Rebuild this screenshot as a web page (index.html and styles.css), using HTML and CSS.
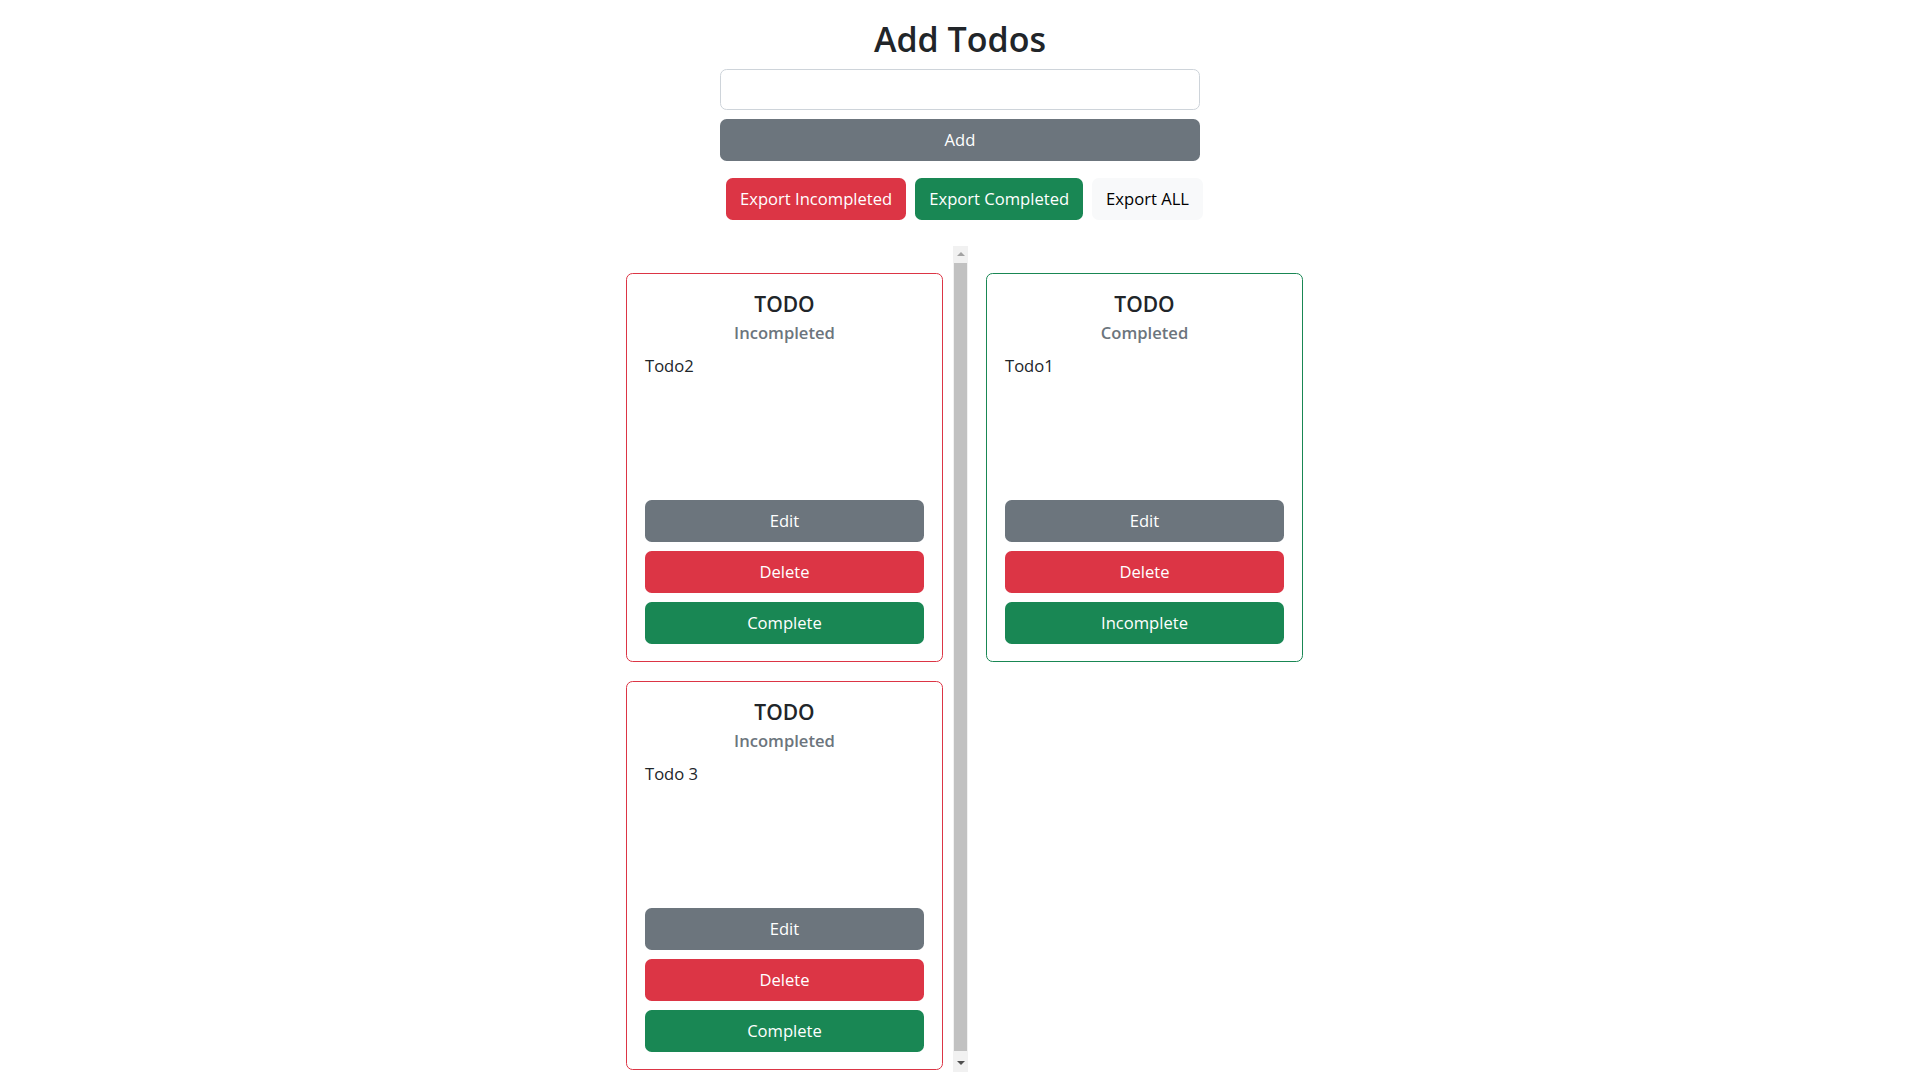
FILE: index.html
```html
<!DOCTYPE html>
<html lang="en">
<head>
  <meta charset="UTF-8" />
  <meta name="viewport" content="width=device-width, initial-scale=1.0"/>
  <title>Todos</title>
  <link rel="stylesheet" href="styles.css">
</head>
<body>
  <div class="app">
    <h1 class="title">Add Todos</h1>

    <div class="add-form">
      <input type="text" class="todo-input" />
      <button class="btn btn-secondary">Add</button>
    </div>

    <div class="exports">
      <button class="btn btn-danger">Export Incompleted</button>
      <button class="btn btn-success">Export Completed</button>
      <button class="btn btn-light">Export ALL</button>
    </div>

    <div class="board">
      <div class="list-wrap">
        <div class="list">
          <div class="card card-open">
            <h5 class="card-title">TODO</h5>
            <h6 class="card-subtitle">Incompleted</h6>
            <p class="card-text">Todo2</p>
            <div class="card-actions">
              <button class="btn btn-secondary">Edit</button>
              <button class="btn btn-danger">Delete</button>
              <button class="btn btn-success">Complete</button>
            </div>
          </div>
          <div class="card card-open">
            <h5 class="card-title">TODO</h5>
            <h6 class="card-subtitle">Incompleted</h6>
            <p class="card-text">Todo 3</p>
            <div class="card-actions">
              <button class="btn btn-secondary">Edit</button>
              <button class="btn btn-danger">Delete</button>
              <button class="btn btn-success">Complete</button>
            </div>
          </div>
        </div>
        <!-- scrollbar of the incompleted list -->
        <div class="scrollbar">
          <span class="arrow arrow-up"></span>
          <div class="thumb"></div>
          <span class="arrow arrow-down"></span>
        </div>
      </div>

      <div class="list">
        <div class="card card-done">
          <h5 class="card-title">TODO</h5>
          <h6 class="card-subtitle">Completed</h6>
          <p class="card-text">Todo1</p>
          <div class="card-actions">
            <button class="btn btn-secondary">Edit</button>
            <button class="btn btn-danger">Delete</button>
            <button class="btn btn-success">Incomplete</button>
          </div>
        </div>
      </div>
    </div>
  </div>
</body>
</html>
```

FILE: styles.css
```css
body {
  margin: 0;
  font-family: "Open Sans", "Noto Sans", sans-serif;
  font-size: 17.6px;
  color: #212529;
  background: #fff;
}
.app {
  display: flex;
  flex-direction: column;
  align-items: center;
}
.title {
  margin: 19px 0 9px;
  font-size: 34px;
  font-weight: 600;
  line-height: 1.2;
}
.add-form {
  width: 480px;
  display: flex;
  flex-direction: column;
  gap: 9px;
}
.todo-input {
  height: 41px;
  box-sizing: border-box;
  border: 1px solid #ced4da;
  border-radius: 6.6px;
  font: inherit;
  padding: 0 13px;
}
.btn {
  box-sizing: border-box;
  height: 42px;
  padding: 0 13px;
  border: 1px solid transparent;
  border-radius: 6.6px;
  font-family: inherit;
  font-size: 16.6px;
  color: #fff;
  cursor: pointer;
}
.btn-secondary {
  background: #6c757d;
}
.btn-danger {
  background: #dc3545;
}
.btn-success {
  background: #198754;
}
.btn-light {
  background: #f8f9fa;
  color: #000;
}
.exports {
  display: flex;
  gap: 9px;
  margin: 17px 0 0 9px;
}
.board {
  display: flex;
  gap: 18px;
  margin: 26px 0 0 9px;
}
.list-wrap {
  display: flex;
  gap: 10px;
  height: 826px;
}
.list {
  width: 317px;
  padding-top: 27px;
  display: flex;
  flex-direction: column;
  gap: 19px;
  overflow: hidden;
}
.card {
  box-sizing: border-box;
  height: 389px;
  flex-shrink: 0;
  padding: 17px 18px;
  border: 1px solid;
  border-radius: 6.6px;
  display: flex;
  flex-direction: column;
}
.card-open {
  border-color: #dc3545;
}
.card-done {
  border-color: #198754;
}
.card-title {
  margin: 1px 0 6px;
  font-size: 21px;
  font-weight: 600;
  line-height: 1.2;
  text-align: center;
}
.card-subtitle {
  margin: 0;
  font-size: 16.6px;
  font-weight: 600;
  line-height: 1.2;
  color: #6c757d;
  text-align: center;
}
.card-text {
  margin: 11px 0 0;
  font-size: 16.6px;
}
.card-actions {
  margin-top: auto;
  display: flex;
  flex-direction: column;
  gap: 9px;
}
.scrollbar {
  width: 15px;
  background: #f1f1f1;
  display: flex;
  flex-direction: column;
  align-items: center;
}
.arrow {
  height: 17px;
  width: 15px;
  display: flex;
  align-items: center;
  justify-content: center;
}
.arrow::after {
  content: "";
  border-left: 4px solid transparent;
  border-right: 4px solid transparent;
}
.arrow-up::after {
  border-bottom: 4px solid #a3a3a3;
}
.arrow-down {
  margin-top: 4px;
}
.arrow-down::after {
  border-top: 4px solid #505050;
}
.thumb {
  width: 13px;
  flex: 1;
  background: #c1c1c1;
}
```
